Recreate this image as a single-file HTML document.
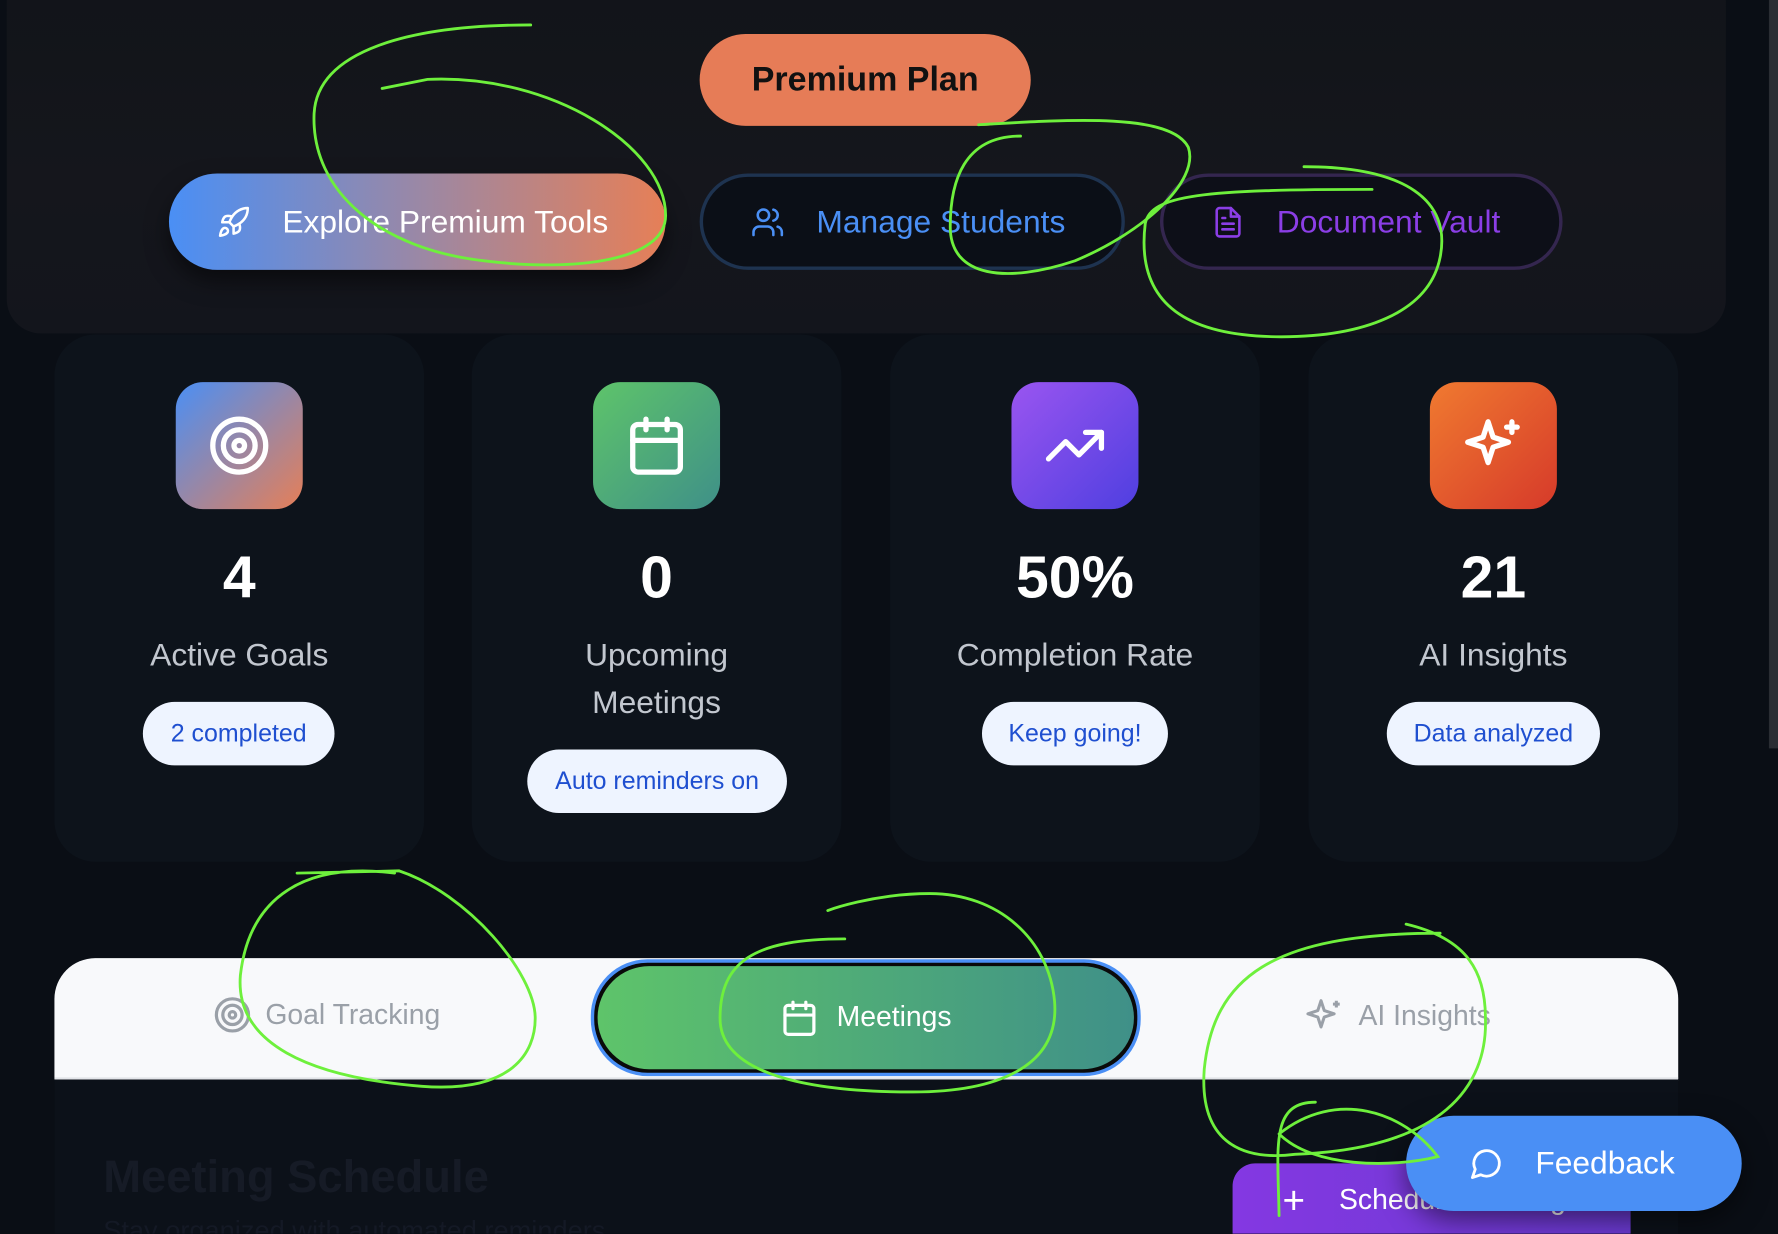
<!DOCTYPE html>
<html><head><meta charset="utf-8"><style>
*{box-sizing:border-box;margin:0;padding:0}
html,body{width:1778px;height:1234px;overflow:hidden;background:#0a0e15;font-family:"Liberation Sans",sans-serif}
#s{position:absolute;left:0;top:0;width:1568px;height:1088px;overflow:hidden;transform:scale(1.13393);transform-origin:0 0;background:#0a0e15}
.a{position:absolute}
.top{left:6px;top:-40px;width:1516px;height:334px;border-radius:30px;background:linear-gradient(180deg,#111419,#15161c 60%,#13151c)}
.pp{left:617px;top:30px;width:292px;height:81px;border-radius:41px;background:#e67c57;color:#111;font-weight:bold;font-size:30px;display:flex;align-items:center;justify-content:center}
.btn{top:153px;height:85px;border-radius:43px;display:flex;align-items:center;font-size:28px;gap:28px}
.b1{left:149px;width:438px;background:linear-gradient(90deg,#4a8ff5,#9a88a6 50%,#e67f57);color:#fff;padding-left:42px;box-shadow:0 10px 20px rgba(0,0,0,.5)}
.b2{left:617px;width:375px;border:3px solid #1e3350;background:#0b0f17;color:#4a8ff5;padding-left:42px}
.b3{left:1023px;width:355px;border:3px solid #34264f;background:#0d0f18;color:#8b3ee6;padding-left:42px}
.card{top:295px;width:326px;height:465px;border-radius:36px;background:#0d131b;text-align:center}
.ic{position:absolute;left:107px;top:42px;width:112px;height:112px;border-radius:24px;display:flex;align-items:center;justify-content:center}
.num{position:absolute;left:0;right:0;top:185px;font-size:52px;font-weight:bold;color:#fff}
.lb{position:absolute;left:0;right:0;top:262px;font-size:28px;color:#c2c7cf;line-height:42px}
.pill{position:absolute;top:324px;height:56px;border-radius:28px;background:#eef4ff;color:#1f4fd0;font-size:22px;display:flex;align-items:center;justify-content:center}
.tabs{left:48px;top:845px;width:1432px;height:108px;border-radius:36px 36px 0 0;background:#f8f9fb;border-bottom:3px solid #e2e4e8}
.tab{top:30px;font-size:25px;color:#9aa0a8;display:flex;align-items:center;gap:12px}
.act{left:521px;top:846px;width:485px;height:103px;border-radius:50px;border:3px solid #4a8ff5;background:#0a0a0a;padding:3px}
.act div{width:100%;height:100%;border-radius:46px;background:linear-gradient(90deg,#5ec46a,#3f9088);display:flex;align-items:center;justify-content:center;color:#fff;font-size:25px;gap:16px}
.low{left:48px;top:952px;width:1432px;height:136px;background:#0c1119}
</style></head><body><div id="s">
<div class="a" style="left:1560px;top:0;width:8px;height:660px;background:#2a2d33"></div>
<div class="a top"></div>
<div class="a pp">Premium Plan</div>
<div class="a btn b1"><svg width="30" height="30" viewBox="0 0 24 24" fill="none" stroke="#fff" stroke-width="1.8" stroke-linecap="round" stroke-linejoin="round"><path d="M4.5 16.5c-1.5 1.3-2 5-2 5s3.7-.5 5-2c.7-.8.7-2.1-.1-2.9a2.2 2.2 0 0 0-2.9-.1z"/><path d="M12 15l-3-3a22 22 0 0 1 2-3.9A12.9 12.9 0 0 1 22 2c0 2.7-.8 7.5-6 11a22 22 0 0 1-4 2z"/><path d="M9 12H4s.6-3 2-4c1.6-1.1 5 0 5 0M12 15v5s3-.6 4-2c1.1-1.6 0-5 0-5"/></svg>Explore Premium Tools</div>
<div class="a btn b2"><svg width="30" height="30" viewBox="0 0 24 24" fill="none" stroke="#4a8ff5" stroke-width="1.8" stroke-linecap="round"><path d="M16 21v-2a4 4 0 0 0-4-4H6a4 4 0 0 0-4 4v2"/><circle cx="9" cy="7" r="4"/><path d="M22 21v-2a4 4 0 0 0-3-3.9M16 3.1a4 4 0 0 1 0 7.8"/></svg>Manage Students</div>
<div class="a btn b3"><svg width="30" height="30" viewBox="0 0 24 24" fill="none" stroke="#8b3ee6" stroke-width="1.8" stroke-linecap="round" stroke-linejoin="round"><path d="M14 2H6a2 2 0 0 0-2 2v16a2 2 0 0 0 2 2h12a2 2 0 0 0 2-2V8z"/><path d="M14 2v6h6M16 13H8M16 17H8M10 9H8"/></svg>Document Vault</div>

<div class="a card" style="left:48px"><div class="ic" style="background:linear-gradient(135deg,#4a8ff5,#e67f57)"><svg width="56" height="56" viewBox="0 0 24 24" fill="none" stroke="#fff" stroke-width="2"><circle cx="12" cy="12" r="10"/><circle cx="12" cy="12" r="6"/><circle cx="12" cy="12" r="2"/></svg></div><div class="num">4</div><div class="lb">Active Goals</div><div class="pill" style="left:78px;width:169px">2 completed</div></div>
<div class="a card" style="left:416px"><div class="ic" style="background:linear-gradient(135deg,#5ec46a,#3f9088)"><svg width="56" height="56" viewBox="0 0 24 24" fill="none" stroke="#fff" stroke-width="2" stroke-linecap="round"><rect x="3" y="4" width="18" height="18" rx="2"/><path d="M16 2v4M8 2v4M3 10h18"/></svg></div><div class="num">0</div><div class="lb">Upcoming<br>Meetings</div><div class="pill" style="left:49px;width:229px;top:366px">Auto reminders on</div></div>
<div class="a card" style="left:785px"><div class="ic" style="background:linear-gradient(135deg,#9a55f0,#4f3fe0)"><svg width="56" height="56" viewBox="0 0 24 24" fill="none" stroke="#fff" stroke-width="2" stroke-linecap="round" stroke-linejoin="round"><path d="M22 7l-8.5 8.5-5-5L2 17"/><path d="M16 7h6v6"/></svg></div><div class="num">50%</div><div class="lb">Completion Rate</div><div class="pill" style="left:81px;width:164px">Keep going!</div></div>
<div class="a card" style="left:1154px"><div class="ic" style="background:linear-gradient(135deg,#f07a30,#d63a2a)"><svg width="56" height="56" viewBox="0 0 24 24" fill="none" stroke="#fff" stroke-width="2" stroke-linejoin="round" stroke-linecap="round"><path d="M10 3l1.9 5.8L17.7 10.7 11.9 12.6 10 18.4 8.1 12.6 2.3 10.7 8.1 8.8z"/><path d="M19 3v4M21 5h-4"/></svg></div><div class="num">21</div><div class="lb">AI Insights</div><div class="pill" style="left:69px;width:188px">Data analyzed</div></div>

<div class="a tabs"></div>
<div class="a tab" style="left:188px;top:878px"><svg width="34" height="34" viewBox="0 0 24 24" fill="none" stroke="#9aa0a8" stroke-width="2"><circle cx="12" cy="12" r="10"/><circle cx="12" cy="12" r="6"/><circle cx="12" cy="12" r="2"/></svg>Goal Tracking</div>
<div class="a act"><div><svg width="34" height="34" viewBox="0 0 24 24" fill="none" stroke="#fff" stroke-width="2" stroke-linecap="round"><rect x="3" y="4" width="18" height="18" rx="2"/><path d="M16 2v4M8 2v4M3 10h18"/></svg>Meetings</div></div>
<div class="a tab" style="left:1150px;top:878px"><svg width="36" height="36" viewBox="0 0 24 24" fill="none" stroke="#9aa0a8" stroke-width="1.8" stroke-linejoin="round"><path d="M10 3l1.9 5.8L17.7 10.7 11.9 12.6 10 18.4 8.1 12.6 2.3 10.7 8.1 8.8z"/><path d="M19 3v4M21 5h-4"/></svg>AI Insights</div>
<div class="a low"></div>
<div class="a" style="left:91px;top:1016px;font-size:40px;font-weight:bold;color:#161b26">Meeting Schedule</div>
<div class="a" style="left:91px;top:1072px;height:16px;overflow:hidden;font-size:24px;line-height:28px;color:#141925">Stay organized with automated reminders</div>
<div class="a" style="left:1087px;top:1026px;width:351px;height:62px;border-radius:20px 20px 0 0;background:linear-gradient(90deg,#8438e2,#6a3ad0);color:#fff;font-size:25px;display:flex;align-items:flex-start;padding-top:18px;padding-left:44px;gap:30px"><span style="font-size:34px;line-height:30px">+</span>Schedule Meeting</div>
<div class="a" style="left:1240px;top:984px;width:296px;height:84px;border-radius:42px;background:#4a8ff5;color:#fff;font-size:28px;display:flex;align-items:center;padding-left:56px;gap:28px;box-shadow:0 8px 24px rgba(0,0,0,.5)"><svg width="30" height="30" viewBox="0 0 24 24" fill="none" stroke="#fff" stroke-width="2" stroke-linejoin="round"><path d="M7.9 20A9 9 0 1 0 4 16.1L2 22z"/></svg>Feedback</div>

<svg class="a" style="left:0;top:0" width="1568" height="1088" fill="none" stroke="#6ef03c" stroke-width="2.5" stroke-linecap="round">
<path d="M468 22C360 22 280 45 277 100c-3 70 60 120 150 130 80 10 160 0 160-40 0-60-100-125-210-120l-40 8"/>
<path d="M900 120c-50 0-62 40-62 80 0 45 50 50 110 30 60-25 110-70 100-100-15-30-100-25-185-20"/>
<path d="M1150 147c90 0 130 30 120 80-10 50-70 70-140 70-70 0-130-20-120-100 5-25 50-30 200-30"/>
<path d="M348 770C270 760 220 790 212 860c-5 60 60 90 160 98 80 6 100-30 100-60 0-40-60-110-120-130l-90 2"/>
<path d="M745 828c-80 0-110 20-110 70 0 50 80 65 170 65 70 0 130-20 125-80-5-55-50-95-110-95-50 0-90 15-90 15"/>
<path d="M1270 823c-150 0-200 40-208 120-5 70 40 80 80 75 130-5 170-60 168-120 0-40-15-70-70-83"/>
<path d="M1160 972c-40 0-33 40-32 100M1128 1000c30 30 100 30 140 20-30-40-90-60-140-20"/>
</svg>
</div></body></html>
